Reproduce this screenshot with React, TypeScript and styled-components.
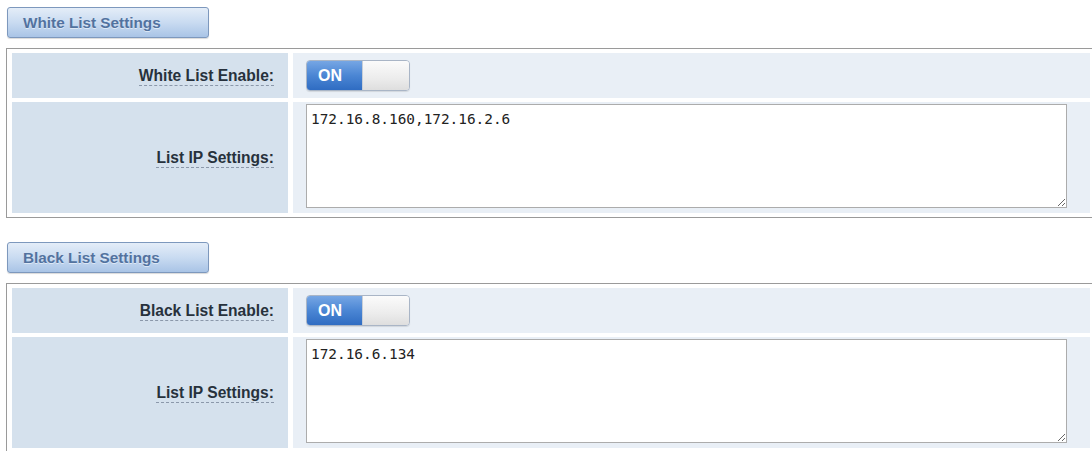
import React from "react";
import styled, {createGlobalStyle} from "styled-components";

interface IListSection {
    title: string,
    enableLabel: string,
    ips: string
}

const sections: IListSection[] = [
    {title: "White List Settings", enableLabel: "White List Enable:", ips: "172.16.8.160,172.16.2.6"},
    {title: "Black List Settings", enableLabel: "Black List Enable:", ips: "172.16.6.134"}
];

const GlobalStyle = createGlobalStyle`
    html, body {
        margin: 0;
        padding: 0;
        background: #ffffff;
        overflow: hidden;
        font-family: "Liberation Sans", Arial, sans-serif;
    }
`,

    Page = styled.div`
        padding: 7px 0 0 6px;
`,

    Section = styled.section`
        margin-bottom: 24px;
`,

    SectionTab = styled.div`
        box-sizing: border-box;
        width: 202px;
        height: 31px;
        margin-left: 1px;
        margin-bottom: 10px;
        padding-left: 15px;
        display: flex;
        align-items: center;
        border: 1px solid #7d98bd;
        border-radius: 3px;
        background: linear-gradient(to bottom, #e4edf8 0%, #c9dbf1 50%, #a9c4e6 100%);
        box-shadow: 0 1px 1px rgba(0, 0, 0, 0.15);
        color: #52729f;
        font-size: 15.3px;
        font-weight: bold;
        text-shadow: 0 1px 0 rgba(255, 255, 255, 0.5);
`,

    Table = styled.table`
        width: 1090px;
        border: 1px solid #9a9a9a;
        border-collapse: separate;
        border-spacing: 5px 4px;
        table-layout: fixed;
`,

    LabelCell = styled.td`
        width: 262px;
        padding: 0 14px 0 0;
        background: #d5e1ed;
        text-align: right;
        vertical-align: middle;
        color: #27313c;
        font-size: 15.6px;
        font-weight: bold;
`,

    LabelText = styled.span`
        border-bottom: 1px dashed #8b98aa;
        padding-bottom: 1px;
`,

    ValueCell = styled.td<{$tall?: boolean}>`
        background: #e9eff6;
        vertical-align: middle;
        padding: ${(p) => (p.$tall ? "2px 0 5px 13px" : "0 0 0 13px")};
        height: ${(p) => (p.$tall ? "104px" : "45px")};
`,

    Toggle = styled.div`
        display: flex;
        width: 104px;
        height: 31px;
        box-sizing: border-box;
        border: 1px solid #a9b5c6;
        border-radius: 4px;
        overflow: hidden;
        box-shadow: 0 1px 1px rgba(0, 0, 0, 0.1);
`,

    ToggleOn = styled.div`
        width: 55px;
        display: flex;
        align-items: center;
        padding-left: 11px;
        box-sizing: border-box;
        background: linear-gradient(to bottom, #76a6e4 0%, #4b86d4 50%, #2f6cc2 100%);
        color: #ffffff;
        font-size: 16px;
        font-weight: bold;
`,

    ToggleOff = styled.div`
        flex: 1;
        border-left: 1px solid #c8ced6;
        background: linear-gradient(to bottom, #fbfbfb 0%, #ececec 60%, #dedede 100%);
`,

    IpArea = styled.textarea`
        display: block;
        box-sizing: border-box;
        width: 761px;
        height: 104px;
        margin: 0;
        padding: 5px 4px;
        border: 1px solid #acacac;
        background: #ffffff;
        color: #222222;
        font-family: "DejaVu Sans Mono", monospace;
        font-size: 14.4px;
        line-height: 18px;
        outline: none;
`;

function ListSection ({section}: {section: IListSection}) {

    return (
        <Section>
            <SectionTab>{section.title}</SectionTab>
            <Table>
                <tbody>
                    <tr>
                        <LabelCell>
                            <LabelText>{section.enableLabel}</LabelText>
                        </LabelCell>
                        <ValueCell>
                            <Toggle>
                                <ToggleOn>ON</ToggleOn>
                                <ToggleOff />
                            </Toggle>
                        </ValueCell>
                    </tr>
                    <tr>
                        <LabelCell>
                            <LabelText>List IP Settings:</LabelText>
                        </LabelCell>
                        <ValueCell $tall>
                            <IpArea defaultValue={section.ips} />
                        </ValueCell>
                    </tr>
                </tbody>
            </Table>
        </Section>
    );

}

export default function App () {

    return (
        <Page>
            <GlobalStyle />
            {sections.map((s) => <ListSection key={s.title} section={s} />)}
        </Page>
    );

}
